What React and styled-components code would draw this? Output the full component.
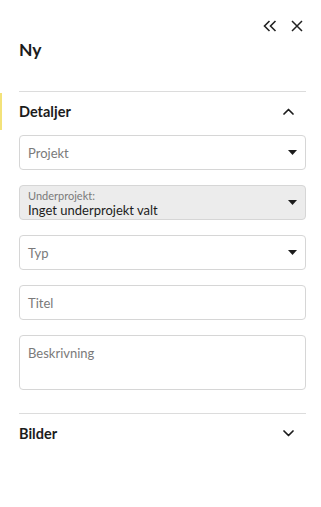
import styled, { createGlobalStyle } from "styled-components";

const GlobalStyle = createGlobalStyle`
  html, body {
    margin: 0;
    padding: 0;
    background: #ffffff;
    font-family: "Lato", "Noto Sans", sans-serif;
    color: #1c1c1c;
  }
  * { box-sizing: border-box; }
`;

const Panel = styled.div`
  width: 321px;
  height: 507px;
  background: #fff;
  display: flex;
  flex-direction: column;
  padding: 0 15px 0 19px;
`;

const TopBar = styled.div`
  display: flex;
  justify-content: flex-end;
  align-items: center;
  gap: 13px;
  padding-top: 18px;
  padding-right: 2px;
  height: 34px;
`;

const IconButton = styled.button`
  border: none;
  background: none;
  padding: 0;
  width: 14px;
  height: 16px;
  display: flex;
  align-items: center;
  justify-content: center;
  color: #222;
  cursor: pointer;
`;

const Title = styled.h1`
  margin: 6px 0 0;
  font-size: 17.5px;
  font-weight: 700;
  line-height: 20px;
  height: 51px;
`;

const Divider = styled.div`
  height: 1px;
  background: #dcdcdc;
`;

const SectionHeader = styled.div`
  position: relative;
  height: 38px;
  display: flex;
  align-items: center;
  justify-content: space-between;
  padding-right: 12px;
  ${(p) =>
    p.$active &&
    `
    &::before {
      content: "";
      position: absolute;
      left: -19px;
      top: 1px;
      bottom: 0;
      width: 2px;
      background: #f3e27a;
    }
  `}
`;

const SectionTitle = styled.span`
  font-size: 14.5px;
  font-weight: 700;
`;

const Fields = styled.div`
  display: flex;
  flex-direction: column;
  gap: 15px;
  padding: 5px 0 23px;
`;

const Field = styled.div`
  height: ${(p) => p.$h || 35}px;
  border: 1px solid #d6d6d6;
  border-radius: 4px;
  background: ${(p) => (p.$filled ? "#ececec" : "#fff")};
  display: flex;
  align-items: ${(p) => (p.$top ? "flex-start" : "center")};
  justify-content: space-between;
  padding: ${(p) => (p.$top ? "9px 8px 0 8px" : "0 8px 0 8px")};
`;

const Placeholder = styled.span`
  font-size: 13px;
  color: #7a7a7a;
`;

const Stack = styled.div`
  display: flex;
  flex-direction: column;
  line-height: 15px;
`;

const SmallLabel = styled.span`
  font-size: 11px;
  color: #7a7a7a;
`;

const Value = styled.span`
  font-size: 13px;
  color: #1c1c1c;
`;

const Caret = () => (
  <svg width="9" height="5" viewBox="0 0 9 5">
    <path d="M0 0 L9 0 L4.5 5 Z" fill="#1c1c1c" />
  </svg>
);

const Chevron = ({ up }) => (
  <svg width="11" height="7" viewBox="0 0 11 7">
    <path
      d={up ? "M1 6 L5.5 1.5 L10 6" : "M1 1 L5.5 5.5 L10 1"}
      fill="none"
      stroke="#1c1c1c"
      strokeWidth="1.7"
      strokeLinecap="round"
      strokeLinejoin="round"
    />
  </svg>
);

const Select = ({ label, value }) => (
  <Field $filled={!!label}>
    {label ? (
      <Stack>
        <SmallLabel>{label}</SmallLabel>
        <Value>{value}</Value>
      </Stack>
    ) : (
      <Placeholder>{value}</Placeholder>
    )}
    <Caret />
  </Field>
);

export default function App() {
  return (
    <>
      <GlobalStyle />
      <Panel>
        <TopBar>
          <IconButton aria-label="Komprimera">
            <svg width="14" height="12" viewBox="0 0 14 12">
              <path
                d="M6.5 1 L1.5 6 L6.5 11 M12.5 1 L7.5 6 L12.5 11"
                fill="none"
                stroke="#222"
                strokeWidth="1.6"
              />
            </svg>
          </IconButton>
          <IconButton aria-label="Stäng">
            <svg width="12" height="12" viewBox="0 0 12 12">
              <path
                d="M1 1 L11 11 M11 1 L1 11"
                fill="none"
                stroke="#222"
                strokeWidth="1.5"
              />
            </svg>
          </IconButton>
        </TopBar>
        <Title>Ny</Title>
        <Divider />
        <SectionHeader $active>
          <SectionTitle>Detaljer</SectionTitle>
          <Chevron up />
        </SectionHeader>
        <Fields>
          <Select value="Projekt" />
          <Select label="Underprojekt:" value="Inget underprojekt valt" />
          <Select value="Typ" />
          <Field>
            <Placeholder>Titel</Placeholder>
          </Field>
          <Field $h={55} $top>
            <Placeholder>Beskrivning</Placeholder>
          </Field>
        </Fields>
        <Divider />
        <SectionHeader>
          <SectionTitle>Bilder</SectionTitle>
          <Chevron />
        </SectionHeader>
      </Panel>
    </>
  );
}
